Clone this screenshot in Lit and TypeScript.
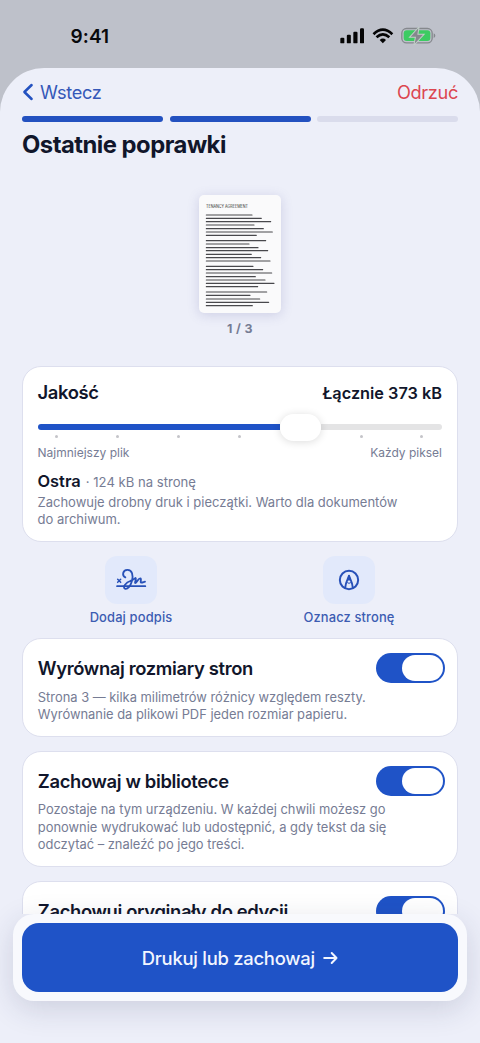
import { LitElement, html, css, svg } from "lit";
import { customElement, property } from "lit/decorators.js";

const LINES: [number, number][] = [
  [60, 159], [70, 187], [80, 215], [90, 165], [101, 193], [111, 220], [121, 172],
  [137, 200], [147, 150], [158, 177], [167, 206], [178, 157], [188, 185], [198, 213],
  [214, 162], [224, 191], [234, 218], [245, 169], [255, 198], [265, 225], [275, 176],
  [291, 203], [301, 153], [312, 182], [322, 209], [332, 160],
];

@customElement("option-card")
class OptionCard extends LitElement {
  @property() heading = "";
  @property({ attribute: false }) lines: string[] = [];

  static styles = css`
    :host {
      display: block;
      flex: none;
      box-sizing: border-box;
      background: #fff;
      border: 1px solid #dddfee;
      border-radius: 19px;
      padding: 13.5px 12px 12.3px 14.8px;
    }
    .head {
      display: flex;
      align-items: center;
      justify-content: space-between;
      height: 31px;
    }
    .title {
      font-size: 18.4px;
      font-weight: 600;
      line-height: 24px;
      letter-spacing: -0.35px;
      margin-top: 0.5px;
      color: #11162b;
      white-space: nowrap;
    }
    .switch {
      display: flex;
      justify-content: flex-end;
      box-sizing: border-box;
      width: 69px;
      height: 30.5px;
      padding: 2px;
      border-radius: 16px;
      background: #1f53c7;
    }
    .knob {
      width: 41px;
      border-radius: 14px;
      background: #fff;
    }
    .text {
      margin-top: 5.2px;
      font-size: 12.9px;
      line-height: 17.4px;
      color: #767c94;
      white-space: nowrap;
    }
  `;

  render() {
    return html`
      <div class="head">
        <div class="title">${this.heading}</div>
        <div class="switch"><div class="knob"></div></div>
      </div>
      <div class="text">${this.lines.map((l) => html`<div>${l}</div>`)}</div>
    `;
  }
}

@customElement("app-root")
class AppRoot extends LitElement {
  static styles = css`
    :host {
      display: flex;
      flex-direction: column;
      width: 480px;
      height: 1043px;
      overflow: hidden;
      background: #bec1ca;
      font-family: Inter, "Liberation Sans", sans-serif;
      color: #11162b;
    }
    .status {
      flex: none;
      display: flex;
      align-items: flex-start;
      justify-content: space-between;
      box-sizing: border-box;
      height: 68px;
      padding: 24.5px 44px 0 70.5px;
      color: #08090c;
    }
    .time {
      font-size: 19px;
      font-weight: 600;
      line-height: 24px;
      letter-spacing: 0.1px;
    }
    .status-icons {
      display: block;
      margin-top: 2.5px;
    }
    .sheet {
      flex: 1;
      min-height: 0;
      display: flex;
      flex-direction: column;
      background: #edeff9;
      border-radius: 44px 44px 0 0;
    }
    .nav {
      flex: none;
      display: flex;
      justify-content: space-between;
      align-items: flex-start;
      box-sizing: border-box;
      height: 48px;
      padding: 11.9px 22px 0;
      font-size: 18.2px;
      line-height: 24px;
      letter-spacing: -0.35px;
    }
    .back {
      display: flex;
      align-items: center;
      gap: 6px;
      color: #3558b8;
    }
    .discard {
      color: #dc4650;
    }
    .progress {
      flex: none;
      display: grid;
      grid-template-columns: repeat(3, 1fr);
      gap: 6.5px;
      padding: 0 22px;
    }
    .step {
      height: 5.5px;
      border-radius: 3px;
      background: #dadcec;
    }
    .step.done {
      background: #2351c0;
    }
    .page-title {
      flex: none;
      margin: 8px 22px 0;
      font-size: 23.8px;
      font-weight: 700;
      line-height: 30px;
      letter-spacing: -0.5px;
    }
    .scroll {
      flex: 1;
      min-height: 0;
      overflow: hidden;
      display: flex;
      flex-direction: column;
      padding: 35px 22px 0;
    }
    .preview {
      flex: none;
      display: flex;
      flex-direction: column;
      align-items: center;
      height: 171.5px;
    }
    .page {
      display: block;
      width: 82px;
      height: 118px;
      border-radius: 5px;
      background: #fafafb;
      box-shadow: 0 2px 12px rgba(90, 90, 160, 0.22);
    }
    .counter {
      margin-top: 8px;
      font-size: 12.4px;
      font-weight: 700;
      line-height: 16px;
      letter-spacing: 0.4px;
      color: #767c94;
    }
    .quality {
      flex: none;
      box-sizing: border-box;
      height: 176px;
      background: #fff;
      border: 1px solid #dddfee;
      border-radius: 19px;
      padding: 12.5px 15px 0 14.5px;
    }
    .row {
      display: flex;
      justify-content: space-between;
      align-items: baseline;
    }
    .q-title {
      font-size: 18.4px;
      font-weight: 600;
      line-height: 24px;
      letter-spacing: -0.36px;
    }
    .q-total {
      font-size: 16.3px;
      font-weight: 600;
    }
    .slider {
      display: flex;
      align-items: center;
      height: 27px;
      margin-top: 10px;
    }
    .fill {
      width: 242.5px;
      height: 6.5px;
      border-radius: 4px 0 0 4px;
      background: #1f53c7;
    }
    .thumb {
      width: 41px;
      height: 27px;
      border-radius: 14px;
      background: #fff;
      box-shadow: 0 1px 8px rgba(0, 0, 0, 0.14);
      z-index: 1;
    }
    .rest {
      flex: 1;
      height: 6.5px;
      border-radius: 0 4px 4px 0;
      background: #e4e4e5;
    }
    .ticks {
      display: flex;
      justify-content: space-between;
      height: 3px;
      margin-top: -6px;
      padding: 0 18.5px 0 17.5px;
    }
    .tick {
      width: 3px;
      height: 3px;
      border-radius: 50%;
      background: #c4c4c9;
    }
    .tick.hidden {
      visibility: hidden;
    }
    .ends {
      margin-top: 7.2px;
      font-size: 12px;
      line-height: 16px;
      color: #767c94;
    }
    .level {
      margin-top: 9px;
      font-size: 13.1px;
      line-height: 22px;
      color: #767c94;
      white-space: nowrap;
    }
    .level-name {
      margin-right: 1.5px;
      font-size: 16.4px;
      font-weight: 600;
      color: #11162b;
    }
    .desc {
      margin-top: 1px;
      font-size: 13px;
      line-height: 17.4px;
      color: #767c94;
    }
    .actions {
      flex: none;
      display: grid;
      grid-template-columns: 1fr 1fr;
      height: 96px;
      padding-top: 13.5px;
      box-sizing: border-box;
    }
    .action {
      display: flex;
      flex-direction: column;
      align-items: center;
      gap: 5px;
      font-size: 12.9px;
      font-weight: 500;
      line-height: 18px;
      letter-spacing: 0.15px;
      color: #3c5cb2;
    }
    .tile {
      display: flex;
      align-items: center;
      justify-content: center;
      width: 52px;
      height: 48px;
      border-radius: 12px;
      background: #e2e9fb;
    }
    .cards {
      flex: none;
      display: flex;
      flex-direction: column;
      gap: 14px;
    }
    .footer {
      flex: none;
      height: 129px;
      padding: 0 13px;
      z-index: 2;
    }
    .bar {
      box-sizing: border-box;
      height: 87px;
      padding: 9px;
      border-radius: 21px;
      background: #f8f9fd;
      box-shadow: 0 8px 30px rgba(40, 45, 90, 0.16);
    }
    .primary {
      display: flex;
      align-items: center;
      justify-content: center;
      gap: 8.5px;
      height: 69px;
      border-radius: 17px;
      background: #1f53c7;
      color: #f2f6ff;
      font-size: 18.4px;
      font-weight: 500;
      letter-spacing: -0.25px;
    }
  `;

  render() {
    return html`
      <div class="status">
        <div class="time">9:41</div>
        <svg class="status-icons" width="96" height="18" viewBox="300 80 288 54">
          <g fill="#050505">
            <rect x="301" y="112" width="12" height="17" rx="3.5" />
            <rect x="320.500" y="103" width="12" height="26" rx="3.5" />
            <rect x="340" y="94" width="12.500" height="35" rx="3.5" />
            <rect x="360" y="84" width="12" height="45" rx="3.5" />
            <path d="M428.500 128.500 L419 119 Q428.500 110.500 438 119 Z" />
          </g>
          <g fill="none" stroke="#050505" stroke-width="8">
            <path d="M400.500 101.500 Q428.500 74.500 457 101.500" />
            <path d="M409.500 111 Q428.500 93.500 448 111" />
          </g>
          <rect x="485.500" y="84.500" width="91" height="43" rx="14" fill="none" stroke="#85888d" stroke-width="4" />
          <path d="M581 99 Q586 102 586 106 Q586 110 581 113 Z" fill="#85888d" />
          <rect x="491" y="90" width="80" height="32" rx="9" fill="#3ccb62" />
          <path d="M535 84 L512 109 H528 L524 130 L549 103 H532 Z" fill="#85888d" stroke="#c2cfc9" stroke-width="6" paint-order="stroke" />
        </svg>
      </div>
      <div class="sheet">
        <div class="nav">
          <div class="back">
            <svg width="12" height="18" viewBox="0 0 12 18"><path d="M9.600 2 L2.400 9 L9.600 16" fill="none" stroke="#2351c0" stroke-width="2.500" stroke-linecap="round" stroke-linejoin="round" /></svg>
            <span>Wstecz</span>
          </div>
          <span class="discard">Odrzuć</span>
        </div>
        <div class="progress">
          <div class="step done"></div>
          <div class="step done"></div>
          <div class="step"></div>
        </div>
        <div class="page-title">Ostatnie poprawki</div>
        <div class="scroll">
          <div class="preview">
            <svg class="page" viewBox="0 0 246 354">
              <text x="21" y="38.500" font-size="12.500" textLength="126" lengthAdjust="spacingAndGlyphs" fill="#333">TENANCY AGREEMENT</text>
              ${LINES.map(([y, x]) => svg`<path d="M22 ${y} H${x}" stroke="#48484c" stroke-width="3.400" stroke-linecap="round" />`)}
            </svg>
            <div class="counter">1 / 3</div>
          </div>
          <div class="quality">
            <div class="row">
              <span class="q-title">Jakość</span>
              <span class="q-total">Łącznie 373 kB</span>
            </div>
            <div class="slider">
              <div class="fill"></div>
              <div class="thumb"></div>
              <div class="rest"></div>
            </div>
            <div class="ticks">
              ${[0, 1, 2, 3, 4, 5, 6].map((i) => html`<div class="tick ${i === 4 ? "hidden" : ""}"></div>`)}
            </div>
            <div class="row ends"><span>Najmniejszy plik</span><span>Każdy piksel</span></div>
            <div class="level"><span class="level-name">Ostra</span> · 124 kB na stronę</div>
            <div class="desc">Zachowuje drobny druk i pieczątki. Warto dla dokumentów<br />do archiwum.</div>
          </div>
          <div class="actions">
            <div class="action">
              <div class="tile">
                <svg width="31" height="26" viewBox="107 66 93 78" fill="none" stroke="#2851b8" stroke-width="5.500" stroke-linecap="round" stroke-linejoin="round">
                  <path d="M112 103 L121 112 M121 103 L112 112" stroke-width="4.500" />
                  <path d="M110 123.500 H195" stroke-width="5" />
                  <path d="M135 97 C124 92 127 75 141 74.500 C156 74 159 92 155 107 C151 123 141 134 134 131 C125 126 138 112 150 108 C160 105 164 99 166 99 C169 100 162 114 165 114 C168 114 175 99 180 100 C185 101 178 113 183 113 C187 113 190 111 194 110" />
                </svg>
              </div>
              <span>Dodaj podpis</span>
            </div>
            <div class="action">
              <div class="tile">
                <svg width="22" height="22" viewBox="0 0 66 66" fill="none" stroke="#2851b8" stroke-width="6" stroke-linejoin="round">
                  <circle cx="33" cy="33" r="27.500" />
                  <path d="M21.500 57 L24 43 L33 20 L42 43 L44.500 57" stroke-width="5.500" />
                  <path d="M29 33 L33 19 L37 33 Z" fill="#2851b8" stroke-width="3" />
                  <path d="M24 43 Q28.500 39 33 43 Q37.500 39 42 43" stroke-width="3" />
                </svg>
              </div>
              <span>Oznacz stronę</span>
            </div>
          </div>
          <div class="cards">
            <option-card heading="Wyrównaj rozmiary stron" .lines=${["Strona 3 — kilka milimetrów różnicy względem reszty.", "Wyrównanie da plikowi PDF jeden rozmiar papieru."]}></option-card>
            <option-card heading="Zachowaj w bibliotece" .lines=${["Pozostaje na tym urządzeniu. W każdej chwili możesz go", "ponownie wydrukować lub udostępnić, a gdy tekst da się", "odczytać – znaleźć po jego treści."]}></option-card>
            <option-card heading="Zachowuj oryginały do edycji"></option-card>
          </div>
        </div>
        <div class="footer">
          <div class="bar">
            <div class="primary">
              <span>Drukuj lub zachowaj</span>
              <svg width="15" height="14" viewBox="0 0 15 14" fill="none" stroke="#f2f6ff" stroke-width="2" stroke-linecap="round" stroke-linejoin="round"><path d="M1.200 7 H13.500 M8.700 2 L13.500 7 L8.700 12" /></svg>
            </div>
          </div>
        </div>
      </div>
    `;
  }
}
